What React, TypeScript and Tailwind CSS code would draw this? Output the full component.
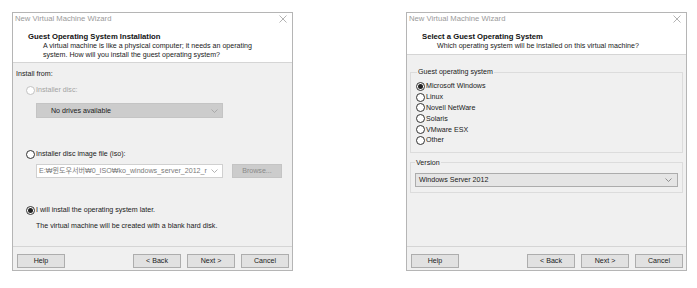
import React from 'react'

// small "v" arrow used by the combo boxes
function Chevron({ color = '#7a7a7a' }: { color?: string }) {
  return (
    <svg width="7" height="4" viewBox="0 0 7 4" className="shrink-0">
      <polyline points="0.5,0.5 3.5,3.5 6.5,0.5" fill="none" stroke={color} strokeWidth="0.8" />
    </svg>
  )
}

function Radio({
  label,
  checked = false,
  disabled = false,
  className = 'h-[10px]',
}: {
  label: string
  checked?: boolean
  disabled?: boolean
  className?: string
}) {
  return (
    <div className={`flex items-center gap-[1px] ${className}`}>
      <span
        className={`w-[9px] h-[9px] rounded-full border flex items-center justify-center bg-white ${
          disabled ? 'border-[#c2c2c2]' : 'border-[#333333]'
        }`}
      >
        {checked && <span className="w-[5px] h-[5px] rounded-full bg-[#222222]" />}
      </span>
      <span className={disabled ? 'text-[#a3a3a3]' : 'text-[#1a1a1a]'}>{label}</span>
    </div>
  )
}

function Button({ children }: { children: React.ReactNode }) {
  return (
    <div className="w-[48px] h-[14px] flex items-center justify-center border bg-[#e1e1e1] border-[#adadad] text-[#1a1a1a]">
      {children}
    </div>
  )
}

function Window({
  title,
  subtitle,
  headerPad,
  children,
}: {
  title: string
  subtitle: string[]
  headerPad: string
  children: React.ReactNode
}) {
  return (
    <div className="w-[281px] h-[259px] border border-[#b5b5b5] bg-[#f0f0f0] flex flex-col">
      <div className={`bg-white border-b border-[#d5d5d5] ${headerPad}`}>
        <div className="h-[12px] flex items-center justify-between pl-[2px] pr-[5px] text-[#9a9a9a] text-[7.7px]">
          <span>New Virtual Machine Wizard</span>
          <svg width="8" height="8" viewBox="0 0 8 8">
            <path d="M0.5 0.5 L7.5 7.5 M7.5 0.5 L0.5 7.5" stroke="#a0a0a0" strokeWidth="0.8" />
          </svg>
        </div>
        <div className="pl-[15px] mt-[7px]">
          <div className="h-[10px] leading-[10px] font-bold text-[7.7px] text-[#111111]">{title}</div>
          <div className="pl-[15px] text-[#1a1a1a]">
            {subtitle.map((line) => (
              <div key={line} className="h-[9px] leading-[9px]">
                {line}
              </div>
            ))}
          </div>
        </div>
      </div>
      <div className="flex-1 flex flex-col">{children}</div>
      <div className="h-[24px] border-t border-[#d5d5d5] flex items-start pt-[7px] pl-[4px] pr-[3px]">
        <Button>Help</Button>
        <div className="flex-1" />
        <div className="flex gap-[6px]">
          <Button>&lt; Back</Button>
          <Button>Next &gt;</Button>
          <Button>Cancel</Button>
        </div>
      </div>
    </div>
  )
}

export default function App() {
  return (
    <div className="w-[697px] h-[288px] bg-white font-['Liberation_Sans','Noto_Sans_CJK_KR',sans-serif] text-[7.1px] leading-[10px] overflow-hidden">
      <div className="flex gap-[113px] pl-[12px] pt-[12px]">
        <Window
          title="Guest Operating System Installation"
          subtitle={[
            'A virtual machine is like a physical computer; it needs an operating',
            'system. How will you install the guest operating system?',
          ]}
          headerPad="pb-[2px]"
        >
          <div className="pl-[3px] flex flex-col">
            <div className="mt-[6px] h-[10px] text-[#1a1a1a]">Install from:</div>
            <Radio label="Installer disc:" disabled className="h-[10px] mt-[6px] ml-[10px]" />
            <div className="mt-[8px] ml-[20px] w-[187px] h-[15px] bg-[#cccccc] border border-[#c4c4c4] flex items-center justify-between pl-[14px] pr-[4px] text-[#1a1a1a]">
              <span>No drives available</span>
              <Chevron color="#a0a0a0" />
            </div>
            <Radio label="Installer disc image file (iso):" className="h-[10px] mt-[31px] ml-[10px]" />
            <div className="mt-[5px] ml-[20px] flex items-center">
              <div className="w-[187px] h-[14px] bg-white border border-[#d0d0d0] flex items-center justify-between pl-[2px] pr-[4px] text-[#7a7a7a]">
                <span className="whitespace-nowrap text-[7.1px]">E:₩윈도우서버₩0_ISO₩ko_windows_server_2012_r</span>
                <Chevron color="#a0a0a0" />
              </div>
              <div className="ml-[9px] w-[50px] h-[14px] bg-[#cccccc] border border-[#c4c4c4] flex items-center justify-center text-[#8a8a8a]">
                Browse...
              </div>
            </div>
            <Radio label="I will install the operating system later." checked className="h-[10px] mt-[27px] ml-[10px]" />
            <div className="mt-[6px] ml-[20px] h-[10px] text-[#1a1a1a]">
              The virtual machine will be created with a blank hard disk.
            </div>
          </div>
        </Window>

        <Window
          title="Select a Guest Operating System"
          subtitle={['Which operating system will be installed on this virtual machine?']}
          headerPad="pb-[3px]"
        >
          <div className="flex flex-col px-[3px] text-[#1a1a1a]">
            <fieldset className="mt-[12px] border border-[#dcdcdc] pl-[5px] pb-[6px]">
              <legend className="ml-[1px] px-[1px] h-[10px] leading-[10px]">Guest operating system</legend>
              <div className="mt-[4px] flex flex-col">
                {['Microsoft Windows', 'Linux', 'Novell NetWare', 'Solaris', 'VMware ESX', 'Other'].map(
                  (os, i) => (
                    <Radio key={os} label={os} checked={i === 0} className="h-[10.8px]" />
                  ),
                )}
              </div>
            </fieldset>
            <fieldset className="mt-[5px] border border-[#dcdcdc] px-[4px] pb-[5px]">
              <legend className="ml-[0px] px-[1px] h-[10px] leading-[10px]">Version</legend>
              <div className="mt-[5px] h-[14px] bg-[#e5e5e5] border border-[#acacac] flex items-center justify-between pl-[3px] pr-[5px]">
                <span>Windows Server 2012</span>
                <Chevron />
              </div>
            </fieldset>
          </div>
        </Window>
      </div>
    </div>
  )
}
